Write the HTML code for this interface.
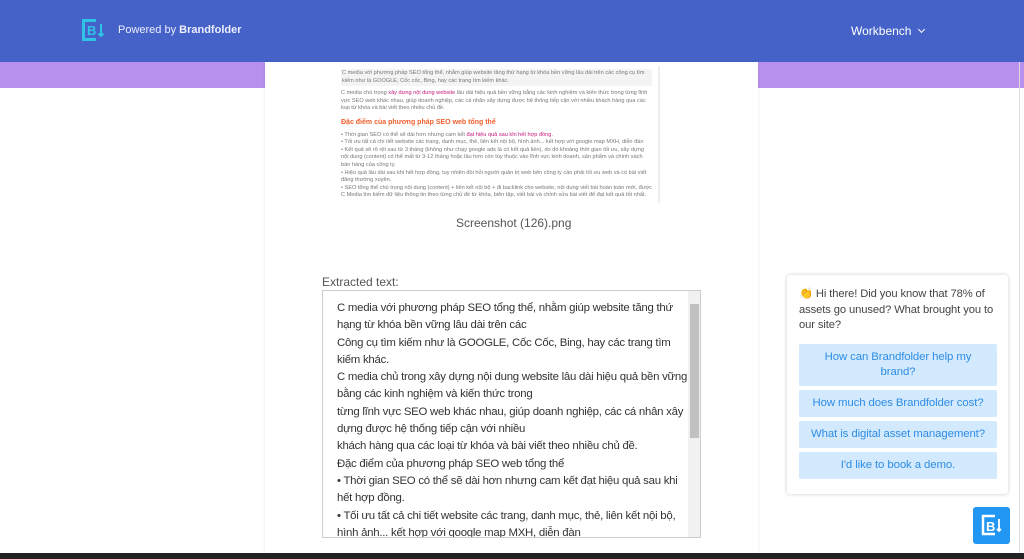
<!DOCTYPE html>
<html><head><meta charset="utf-8"><style>
*{margin:0;padding:0;box-sizing:border-box}
body{width:1024px;height:559px;overflow:hidden;background:#fff;font-family:"Liberation Sans","Noto Sans CJK SC",sans-serif;position:relative}
.hdr{position:absolute;left:0;top:0;width:1024px;height:62px;background:#4462c8}
.band{position:absolute;left:0;top:62px;width:1024px;height:26px;background:#b98fee}
.card{position:absolute;left:265px;top:62px;width:493px;height:497px;background:#fff;box-shadow:0 0 4px rgba(0,0,0,.08)}
.abs{position:absolute}
.img{left:335px;top:66px;width:325px;height:137px;background:#fff;font-size:5.6px;line-height:7.6px;color:#777;padding:3px 6px;overflow:hidden;border-right:2px solid #eee}
.ta{left:322px;top:290px;width:379px;height:248px;border:1px solid #ccc;background:#fff;padding:9px 14px 0 14px;font-size:11.4px;letter-spacing:-0.25px;line-height:17.3px;color:#333;overflow:hidden;white-space:nowrap}
.sb{left:688px;top:291px;width:12px;height:246px;background:#f1f1f1}
.thumb{left:690px;top:304px;width:9px;height:134px;background:#c1c1c1}
.chat{left:787px;top:275px;width:221px;height:219px;background:#fff;box-shadow:0 0 4px rgba(0,0,0,.2);border-radius:3px;padding:12px 12px;font-size:11.2px;letter-spacing:-0.1px;line-height:15.5px;color:#444;white-space:nowrap}
.btn{position:absolute;left:12px;width:198px;background:#d3e9fd;color:#2f8de4;text-align:center;font-size:11.4px;line-height:15px;border-radius:2px;display:flex;align-items:center;justify-content:center}
</style></head><body>
<div class="hdr">
<svg class="abs" style="left:82px;top:19px" width="24" height="23" viewBox="0 0 24 23"><path d="M14 1.5H1.5v19H14" fill="none" stroke="#2fc3e6" stroke-width="3"/><text x="5" y="16" font-family="Liberation Sans" font-weight="bold" font-size="13" fill="#2fc3e6">B</text><path d="M19 5v12m-2.5-2.5L19 17l2.5-2.5" stroke="#2fc3e6" stroke-width="2" fill="none"/></svg>
<div class="abs" style="left:118px;top:24px;font-size:11px;color:#eef">Powered by <b>Brandfolder</b></div>
<div class="abs" style="left:851px;top:24px;font-size:12px;color:#fff">Workbench <span style="display:inline-block;width:5px;height:5px;border-right:1.5px solid #fff;border-bottom:1.5px solid #fff;transform:rotate(45deg);margin:0 0 3px 4px"></span></div>
</div>
<div class="band"></div>
<div class="card"></div>
<div class="abs img"><div style="background:#f4f4f4;padding:1px">C media với phương pháp SEO tổng thể, nhằm giúp website tăng thứ hạng từ khóa bền vững lâu dài trên các công cụ tìm kiếm như là GOOGLE, Cốc cốc, Bing, hay các trang tìm kiếm khác.</div><p style="margin-top:4px">C media chú trọng <span style="color:#c2187a">xây dựng nội dung website</span> lâu dài hiệu quả bền vững bằng các kinh nghiệm và kiến thức trong từng lĩnh vực SEO web khác nhau, giúp doanh nghiệp, các cá nhân xây dựng được hệ thống tiếp cận với nhiều khách hàng qua các loại từ khóa và bài viết theo nhiều chủ đề.</p><p style="color:#f06030;font-size:7px;font-weight:bold;margin:6px 0 5px">Đặc điểm của phương pháp SEO web tổng thể</p><p>• Thời gian SEO có thể sẽ dài hơn nhưng cam kết <span style="color:#c2187a">đạt hiệu quả sau khi hết hợp đồng.</span></p><p>• Tối ưu tất cả chi tiết website các trang, danh mục, thẻ, liên kết nội bộ, hình ảnh... kết hợp với google map MXH, diễn đàn</p><p>• Kết quả sẽ rõ rệt sau từ 3 tháng (không như chạy google ads là có kết quả liền), do đó khoảng thời gian tối ưu, xây dựng nội dung (content) có thể mất từ 3-12 tháng hoặc lâu hơn còn tùy thuộc vào lĩnh vực kinh doanh, sản phẩm và chính sách bán hàng của công ty.</p><p>• Hiệu quả lâu dài sau khi hết hợp đồng, tuy nhiên đòi hỏi người quản trị web bên công ty cần phải tối ưu web và có bài viết đăng thường xuyên.</p><p>• SEO tổng thể chú trọng nội dung (content) + liên kết nội bộ + đi backlink cho website, nội dung viết bài hoàn toàn mới, được C Media tìm kiếm dữ liệu thông tin theo từng chủ đề từ khóa, biên tập, viết bài và chỉnh sửa bài viết để đạt kết quả tốt nhất.</p></div>
<div class="abs" style="left:456px;top:216px;font-size:12px;color:#555">Screenshot (126).png</div>
<div class="abs" style="left:322px;top:275px;font-size:12px;color:#555">Extracted text:</div>
<div class="abs ta">C media với phương pháp SEO tổng thể, nhằm giúp website tăng thứ<br>hạng từ khóa bền vững lâu dài trên các<br>Công cụ tìm kiếm như là GOOGLE, Cốc Cốc, Bing, hay các trang tìm<br>kiếm khác.<br>C media chủ trong xây dựng nội dung website lâu dài hiệu quả bền vững<br>bằng các kinh nghiệm và kiến thức trong<br>từng lĩnh vực SEO web khác nhau, giúp doanh nghiệp, các cá nhân xây<br>dựng được hệ thống tiếp cận với nhiều<br>khách hàng qua các loại từ khóa và bài viết theo nhiều chủ đề.<br>Đặc điểm của phương pháp SEO web tổng thể<br>• Thời gian SEO có thể sẽ dài hơn nhưng cam kết đạt hiệu quả sau khi<br>hết hợp đồng.<br>• Tối ưu tất cả chi tiết website các trang, danh mục, thẻ, liên kết nội bộ,<br>hình ảnh... kết hợp với google map MXH, diễn đàn<br>• Kết quả sẽ rõ rệt sau từ 3 tháng (không như chay google ads là có kết<br>quả liền), do đó khoảng thời gian tối ưu, xây dựng<br>nội dung (content) Có thể mất từ 3-12 tháng hoặc lâu hơn còn tùy thuộc<br>vào lĩnh vực kinh doanh, sản phẩm và chính</div>
<div class="abs sb"></div><div class="abs thumb"></div>
<div class="abs chat">👏 Hi there! Did you know that 78% of<br>assets go unused? What brought you to<br>our site?
<div class="btn" style="top:69px;height:42px">How can Brandfolder help my<br>brand?</div>
<div class="btn" style="top:115px;height:27px">How much does Brandfolder cost?</div>
<div class="btn" style="top:146px;height:27px">What is digital asset management?</div>
<div class="btn" style="top:177px;height:27px">I'd like to book a demo.</div>
</div>
<div class="abs" style="left:973px;top:507px;width:37px;height:37px;background:#2196f3;border-radius:3px"><svg width="37" height="37" viewBox="0 0 37 37"><path d="M22 9H10v18h12" fill="none" stroke="#fff" stroke-width="2.5"/><text x="13" y="24" font-family="Liberation Sans" font-weight="bold" font-size="13" fill="#fff">B</text><path d="M26 12v12m-2-2l2 2 2-2" stroke="#fff" stroke-width="1.8" fill="none"/></svg></div>
<div class="abs" style="left:1019px;top:62px;width:1px;height:491px;background:#ddd"></div>
<div class="abs" style="left:0;top:553px;width:1024px;height:6px;background:#222"></div>
</body></html>
